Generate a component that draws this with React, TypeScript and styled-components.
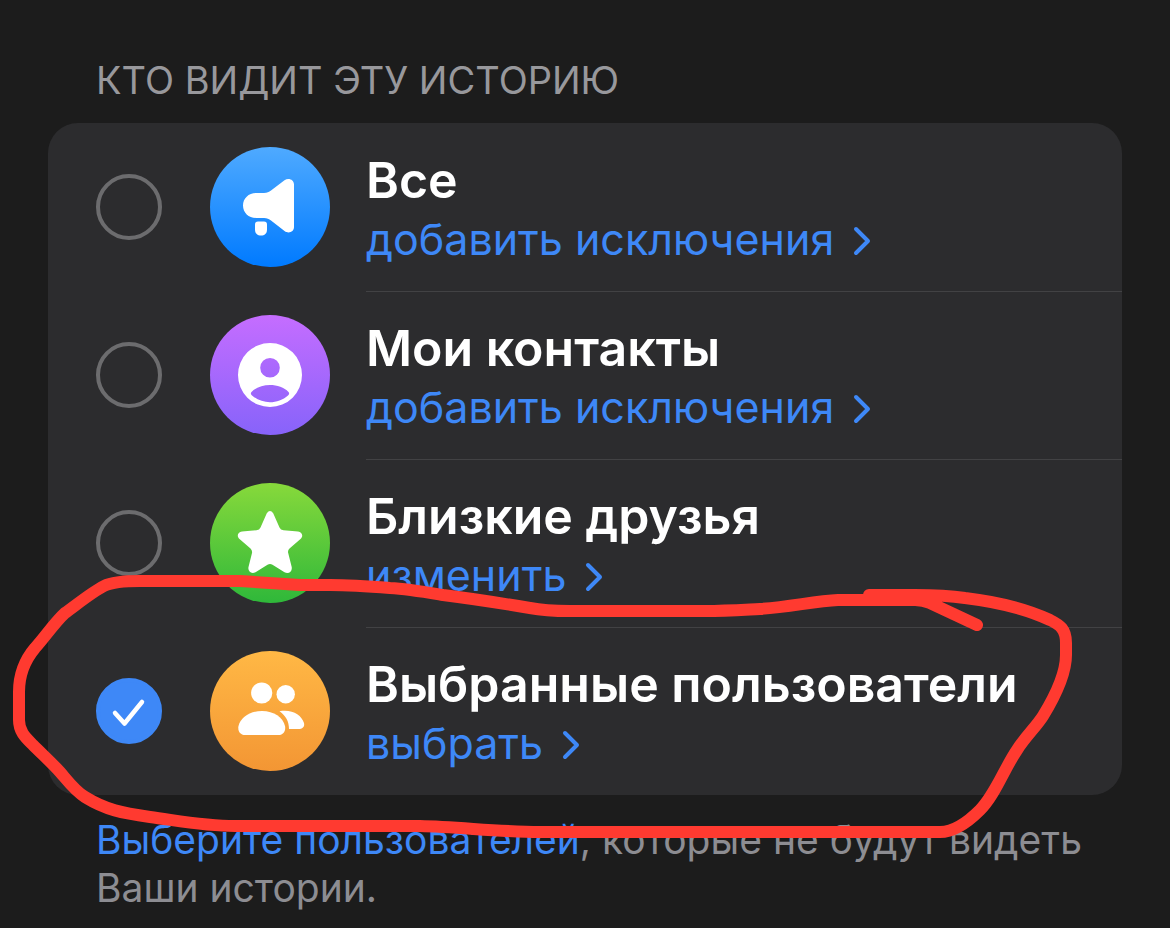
import React, { useState } from "react";
import styled, { createGlobalStyle } from "styled-components";

const GlobalStyle = createGlobalStyle`
  * { box-sizing: border-box; }
  html { background: #1c1c1c; }
  body { margin: 0; }
`;

const Page = styled.main`
  position: relative;
  min-height: 100vh;
  overflow: hidden;
  padding: 56px 48px 16px;
  background: #1c1c1c;
  font-family: Inter, "Noto Sans", sans-serif;
`;

const Heading = styled.h1`
  margin: 0 0 19px;
  padding: 0 48px;
  font-size: 38px;
  font-weight: 400;
  line-height: 48px;
  color: #98989c;
  text-transform: uppercase;
`;

const Card = styled.div`
  border-radius: 30px;
  background: #2c2c2e;
`;

const Row = styled.div`
  display: flex;
  align-items: center;
  height: 168px;
  padding-left: 48px;
`;

const RadioBox = styled.span`
  display: grid;
  flex: none;
  margin-right: 48px;

  > * { grid-area: 1 / 1; }
  > svg { pointer-events: none; }
`;

const Radio = styled.input`
  appearance: none;
  width: 66px;
  height: 66px;
  margin: 0;
  border: 4px solid #6c6c6e;
  border-radius: 50%;
  cursor: pointer;

  &:checked {
    border-color: #3e88f7;
    background: #3e88f7;
  }
`;

const Badge = styled.span<{ $from: string; $to: string }>`
  flex: none;
  width: 120px;
  height: 120px;
  margin-right: 36px;
  border-radius: 50%;
  background: linear-gradient(${(p) => p.$from}, ${(p) => p.$to});

  > svg { display: block; }
`;

const Body = styled.div<{ $divided: boolean }>`
  display: flex;
  flex: 1;
  flex-direction: column;
  align-items: flex-start;
  align-self: stretch;
  min-width: 0;
  padding-top: 27px;
  box-shadow: ${(p) => (p.$divided ? "inset 0 1px #424244" : "none")};
`;

const Title = styled.label`
  font-size: 50px;
  font-weight: 600;
  line-height: 60px;
  color: #fff;
  white-space: nowrap;
  cursor: pointer;
`;

const Action = styled.button`
  display: flex;
  align-items: center;
  gap: 18px;
  padding: 0;
  border: 0;
  background: none;
  font: inherit;
  font-size: 43px;
  line-height: 58px;
  color: #3e88f7;
  white-space: nowrap;
  cursor: pointer;
`;

const Footnote = styled.p`
  margin: 21px 0 0;
  padding: 0 24px 0 48px;
  font-size: 39px;
  line-height: 48px;
  color: #8d8d92;
`;

const FootLink = styled.a`
  color: #3e88f7;
  text-decoration: none;
`;

const Marker = styled.svg`
  position: absolute;
  top: 0;
  left: 0;
  width: 100%;
  pointer-events: none;
`;

const Megaphone = () => (
  <svg width="120" height="120" viewBox="0 0 120 120" fill="#fff" aria-hidden="true">
    <path d="M46 46H54C57 46 59 45 61 43.500L74.500 33.200C78.500 30.300 84 32.500 84 37.500V80C84 85 78.500 87 74.500 84L61 73.500C59 72 57 71 54 71H46C38.500 71 33 65.500 33 58.500S38.500 46 46 46Z" />
    <path d="M48 74.500H54Q57 74.500 57 77.500V82.500C57 86.500 54.500 88.500 51 88.500S45 86.500 45 82.500V77.500Q45 74.500 48 74.500Z" />
  </svg>
);

const Contact = () => (
  <svg width="120" height="120" viewBox="0 0 120 120" fill="#fff" aria-hidden="true">
    <path
      fillRule="evenodd"
      d="M60 28A32 32 0 1 1 60 92A32 32 0 1 1 60 28ZM60 43A9.800 9.800 0 1 0 60 62.600A9.800 9.800 0 1 0 60 43ZM41.500 77Q40 79 42 80.500C52 89.500 68 89.500 78 80.500Q80 79 78.500 77C70 67.800 50 67.800 41.500 77Z"
    />
  </svg>
);

const Star = () => (
  <svg width="120" height="120" viewBox="0 0 120 120" fill="#fff" aria-hidden="true">
    <path d="M56.800 30.300Q60 25.700 63.200 30.300L69.500 44.500Q70.500 47 73.500 47.200L88 48.500C92.500 49 93.500 53.500 90.500 56L79.500 65.500Q77.500 67.500 78.200 70L81.700 84C82.500 88.500 78.500 91.500 74.500 89.200L62.500 81.800Q60 80.300 57.500 81.800L45.500 89.200C41.500 91.500 37.500 88.500 38.500 84L42 70Q42.500 67.500 40.500 65.500L29.500 56C26.500 53.500 27.500 49 32 48.500L46.500 47.200Q49.500 47 50.500 44.500Z" />
  </svg>
);

const People = () => (
  <svg width="120" height="120" viewBox="0 0 120 120" fill="#fff" aria-hidden="true">
    <circle cx="51.700" cy="42" r="10.600" />
    <circle cx="75.700" cy="43.300" r="9.200" />
    <path d="M35 84C30 84 27.500 79.500 28.500 75C30.500 66.500 40 60 52 60S73 66.500 75 75C76 79.500 73.500 84 68.500 84Z" />
    <path d="M69.500 60.300C82 58 91.500 64 94 72C95 76 92 78 88.500 78H79C79 70.500 76 65 69.500 60.300Z" />
  </svg>
);

const Check = () => (
  <svg width="66" height="66" viewBox="0 0 66 66" fill="none" aria-hidden="true">
    <path d="M19 35L28.500 45.500L46 24" stroke="#fff" strokeWidth="4.500" strokeLinecap="round" strokeLinejoin="round" />
  </svg>
);

const Chevron = () => (
  <svg width="20" height="36" viewBox="0 0 20 36" fill="none" aria-hidden="true">
    <path d="M4 8L16 20L4 32" stroke="currentColor" strokeWidth="4" strokeLinecap="round" strokeLinejoin="round" />
  </svg>
);

const options = [
  { id: "everyone", title: "Все", action: "добавить исключения", from: "#4faaff", to: "#007aff", Icon: Megaphone },
  { id: "contacts", title: "Мои контакты", action: "добавить исключения", from: "#c56dff", to: "#8763fa", Icon: Contact },
  { id: "close", title: "Близкие друзья", action: "изменить", from: "#87d93b", to: "#2fb83a", Icon: Star },
  { id: "selected", title: "Выбранные пользователи", action: "выбрать", from: "#ffb845", to: "#f39634", Icon: People },
];

export default function App() {
  const [selected, setSelected] = useState("selected");

  return (
    <Page>
      <GlobalStyle />
      <Heading id="audience">Кто видит эту историю</Heading>
      <Card role="radiogroup" aria-labelledby="audience">
        {options.map(({ id, title, action, from, to, Icon }, index) => (
          <Row key={id}>
            <RadioBox>
              <Radio
                type="radio"
                name="audience"
                id={id}
                checked={selected === id}
                onChange={() => setSelected(id)}
              />
              {selected === id && <Check />}
            </RadioBox>
            <Badge $from={from} $to={to}>
              <Icon />
            </Badge>
            <Body $divided={index > 0}>
              <Title htmlFor={id}>{title}</Title>
              <Action type="button">
                {action}
                <Chevron />
              </Action>
            </Body>
          </Row>
        ))}
      </Card>
      <Footnote>
        <FootLink href="#users">Выберите пользователей</FootLink>, которые не будут видеть Ваши истории.
      </Footnote>
      <Marker viewBox="0 0 1170 928" fill="none" aria-hidden="true">
        <path
          d="M977 625L930 603Q923 600 915 600H838C815 601 790 607 760 609C740 610 725 611 705 611H570C555 611 545 611 530 608C500 603 475 599 443 595C425 592 408 589 390 588C365 586 350 585 330 585H300L240 581H140C122 581 112 582 104 586C92 592 75 606 65 613C55 622 45 637 35 648C24 661 19 676 19 692V720C19 732 26 738 33 745C42 754 53 764 60 772C67 780 75 791 85 797C106 810 122 813 150 817C180 821 205 826 235 826H420C460 827 500 832 540 832H940C955 832 970 820 980 810C995 795 1004 769 1017 750C1025 737 1036 727 1043 716C1054 698 1066 675 1066 655V643C1066 629 1060 625 1050 620C1020 606 990 601 965 598C945 595 930 595 915 595H869"
          stroke="#ff3a30"
          strokeWidth="12"
          strokeLinecap="round"
          strokeLinejoin="round"
        />
      </Marker>
    </Page>
  );
}
